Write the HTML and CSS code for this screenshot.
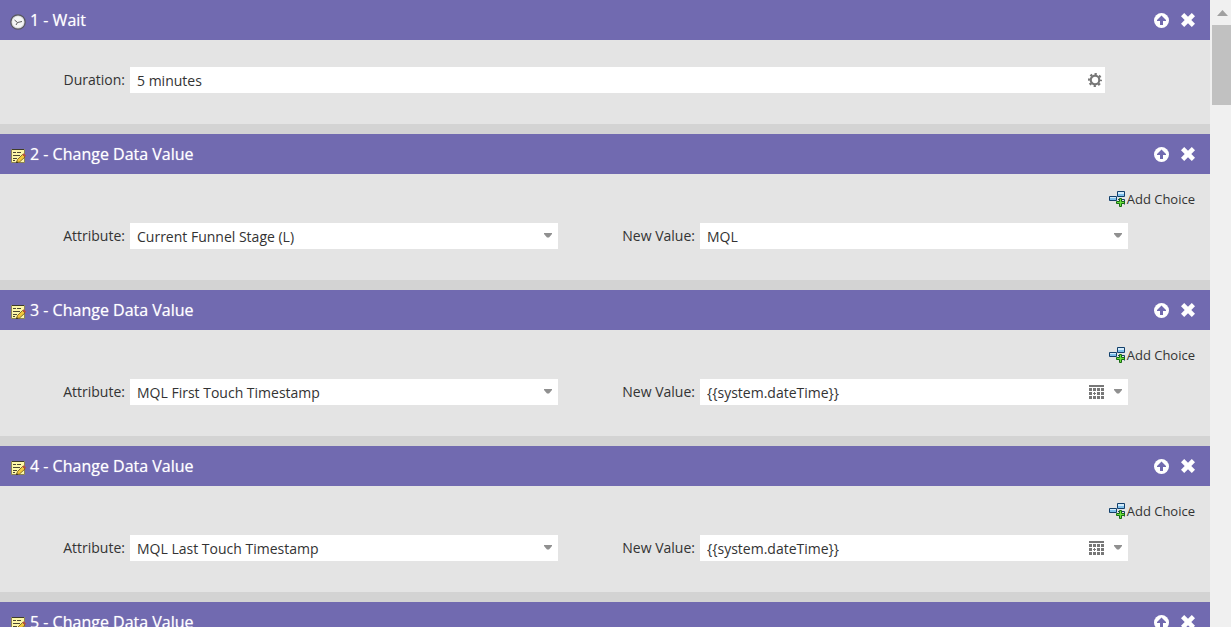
FILE: index.html
```html
<!DOCTYPE html>
<html lang="en">
<head>
  <meta charset="UTF-8">
  <title>Flow</title>
  <link rel="stylesheet" href="styles.css">
</head>
<body>

  <!-- Shared icons -->
  <svg class="icon-defs" aria-hidden="true">
    <symbol id="icon-clock" viewBox="0 0 16 16">
      <circle cx="8" cy="8" r="7.2" fill="#cfd0d2" stroke="#56565c" stroke-width="1.2"/>
      <circle cx="8" cy="8" r="5.8" fill="#f4f6f5"/>
      <path d="M4.500 6L7.500 8.500L12 7.500M7.500 8.500L6 11" fill="none" stroke="#5b5b5b"/>
    </symbol>
    <symbol id="icon-note" viewBox="0 0 16 16">
      <path d="M1.500 1.500h13v13h-13z" fill="#fdf7a8" stroke="#8b8352"/>
      <path d="M2 1.500h12" stroke="#3f3b28"/>
      <path d="M3 4.500h3M7 4.500h4M3 7.500h7M3 10.500h4M3 12.500h2" stroke="#4d4832"/>
      <path d="M6.500 14.500l1-3L12.500 6.500l2.500 2.500-5.500 5z" fill="#f3c83c" stroke="#69511b" stroke-width=".8"/>
      <path d="M12.500 6.500l1.200-1.300 2.300 2.300-1 1.500z" fill="#b94b43"/>
      <path d="M6.200 15l.5-1.700 1.400 1.200z" fill="#222"/>
    </symbol>
    <symbol id="icon-up" viewBox="0 0 15 15">
      <circle cx="7.500" cy="7.500" r="7.500" fill="#fff"/>
      <path d="M7.500 2.500L12 7v1H9v4H6V8H3V7z" fill="#716ab0"/>
    </symbol>
    <symbol id="icon-close" viewBox="0 0 14 14">
      <path d="M3.200 0L7 3.700 10.800 0 14 3.200 10.300 7 14 10.800 10.800 14 7 10.300 3.200 14 0 10.800 3.700 7 0 3.200z" fill="#fff"/>
    </symbol>
    <symbol id="icon-gear" viewBox="0 0 14 14">
      <circle cx="7" cy="7" r="4.300" fill="none" stroke="#777" stroke-width="2.200"/>
      <circle cx="7" cy="7" r="6" fill="none" stroke="#777" stroke-width="2" stroke-dasharray="2.300 2.412" stroke-dashoffset="1.150"/>
    </symbol>
    <symbol id="icon-choice" viewBox="0 0 16 16">
      <path d="M8.500 .5h7v5h-7zM.5 5.500h7v4h-7z" fill="#7fc0ec" stroke="#123f6b"/>
      <path d="M9 1h6v2H9zM1 6h6v1H1z" fill="#d2ebfb"/>
      <path d="M9 8.500h6.500v5" fill="none" stroke="#123f6b"/>
      <path d="M10.500 7.500h2v3h3v2h-3v3h-2v-3h-3v-2h3z" fill="#6be03c" stroke="#176a14"/>
    </symbol>
    <symbol id="icon-calendar" viewBox="0 0 15 14">
      <path d="M0 0h15v2H0zM0 3h3v3H0zM4 3h3v3H4zM8 3h3v3H8zM12 3h3v3h-3zM0 7h3v3H0zM8 7h3v3H8zM12 7h3v3h-3zM0 11h3v3H0zM4 11h3v3H4zM8 11h3v3H8zM12 11h3v3h-3zM5 7h1v1h1v1H6v1H5V9H4V8h1z" fill="#777"/>
    </symbol>
    <symbol id="icon-arrow" viewBox="0 0 8 5">
      <path d="M0 0h8v1L5 4.500H3L0 1z" fill="#909090"/>
    </symbol>
  </svg>

  <main class="flow">

    <section class="step">
      <header class="step-header">
        <svg class="step-icon"><use href="#icon-clock"/></svg>
        <h2 class="step-title">1 - Wait</h2>
        <button class="icon-button" type="button" aria-label="Move up"><svg class="up-icon"><use href="#icon-up"/></svg></button>
        <button class="icon-button" type="button" aria-label="Remove"><svg class="close-icon"><use href="#icon-close"/></svg></button>
      </header>
      <div class="step-body step-body-wait">
        <div class="field">
          <label class="field-label" for="duration">Duration:</label>
          <div class="field-box field-box-gear">
            <input class="field-value" id="duration" type="text" value="5 minutes">
            <button class="icon-button" type="button" aria-label="Settings"><svg class="gear-icon"><use href="#icon-gear"/></svg></button>
          </div>
        </div>
      </div>
    </section>

    <section class="step">
      <header class="step-header">
        <svg class="step-icon"><use href="#icon-note"/></svg>
        <h2 class="step-title">2 - Change Data Value</h2>
        <button class="icon-button" type="button" aria-label="Move up"><svg class="up-icon"><use href="#icon-up"/></svg></button>
        <button class="icon-button" type="button" aria-label="Remove"><svg class="close-icon"><use href="#icon-close"/></svg></button>
      </header>
      <div class="step-body">
        <button class="add-choice" type="button"><svg class="choice-icon"><use href="#icon-choice"/></svg>Add Choice</button>
        <div class="fields">
          <div class="field">
            <label class="field-label" for="attribute2">Attribute:</label>
            <div class="field-box">
              <select class="field-value" id="attribute2"><option>Current Funnel Stage (L)</option></select>
              <svg class="arrow-icon"><use href="#icon-arrow"/></svg>
            </div>
          </div>
          <div class="field">
            <label class="field-label" for="value2">New Value:</label>
            <div class="field-box">
              <select class="field-value" id="value2"><option>MQL</option></select>
              <svg class="arrow-icon"><use href="#icon-arrow"/></svg>
            </div>
          </div>
        </div>
      </div>
    </section>

    <section class="step">
      <header class="step-header">
        <svg class="step-icon"><use href="#icon-note"/></svg>
        <h2 class="step-title">3 - Change Data Value</h2>
        <button class="icon-button" type="button" aria-label="Move up"><svg class="up-icon"><use href="#icon-up"/></svg></button>
        <button class="icon-button" type="button" aria-label="Remove"><svg class="close-icon"><use href="#icon-close"/></svg></button>
      </header>
      <div class="step-body">
        <button class="add-choice" type="button"><svg class="choice-icon"><use href="#icon-choice"/></svg>Add Choice</button>
        <div class="fields">
          <div class="field">
            <label class="field-label" for="attribute3">Attribute:</label>
            <div class="field-box">
              <select class="field-value" id="attribute3"><option>MQL First Touch Timestamp</option></select>
              <svg class="arrow-icon"><use href="#icon-arrow"/></svg>
            </div>
          </div>
          <div class="field">
            <label class="field-label" for="value3">New Value:</label>
            <div class="field-box">
              <select class="field-value" id="value3"><option>{{system.dateTime}}</option></select>
              <button class="icon-button" type="button" aria-label="Pick a date"><svg class="calendar-icon"><use href="#icon-calendar"/></svg></button>
              <svg class="arrow-icon"><use href="#icon-arrow"/></svg>
            </div>
          </div>
        </div>
      </div>
    </section>

    <section class="step">
      <header class="step-header">
        <svg class="step-icon"><use href="#icon-note"/></svg>
        <h2 class="step-title">4 - Change Data Value</h2>
        <button class="icon-button" type="button" aria-label="Move up"><svg class="up-icon"><use href="#icon-up"/></svg></button>
        <button class="icon-button" type="button" aria-label="Remove"><svg class="close-icon"><use href="#icon-close"/></svg></button>
      </header>
      <div class="step-body">
        <button class="add-choice" type="button"><svg class="choice-icon"><use href="#icon-choice"/></svg>Add Choice</button>
        <div class="fields">
          <div class="field">
            <label class="field-label" for="attribute4">Attribute:</label>
            <div class="field-box">
              <select class="field-value" id="attribute4"><option>MQL Last Touch Timestamp</option></select>
              <svg class="arrow-icon"><use href="#icon-arrow"/></svg>
            </div>
          </div>
          <div class="field">
            <label class="field-label" for="value4">New Value:</label>
            <div class="field-box">
              <select class="field-value" id="value4"><option>{{system.dateTime}}</option></select>
              <button class="icon-button" type="button" aria-label="Pick a date"><svg class="calendar-icon"><use href="#icon-calendar"/></svg></button>
              <svg class="arrow-icon"><use href="#icon-arrow"/></svg>
            </div>
          </div>
        </div>
      </div>
    </section>

    <section class="step">
      <header class="step-header">
        <svg class="step-icon"><use href="#icon-note"/></svg>
        <h2 class="step-title">5 - Change Data Value</h2>
        <button class="icon-button" type="button" aria-label="Move up"><svg class="up-icon"><use href="#icon-up"/></svg></button>
        <button class="icon-button" type="button" aria-label="Remove"><svg class="close-icon"><use href="#icon-close"/></svg></button>
      </header>
    </section>

  </main>

  <!-- Scrollbar -->
  <div class="scrollbar" aria-hidden="true">
    <svg class="scroll-up" viewBox="0 0 11 6"><path d="M0 6L5.500 0L11 6z" fill="#a0a0a0"/></svg>
    <div class="scroll-thumb"></div>
  </div>

</body>
</html>
```

FILE: styles.css
```css
* {
  box-sizing: border-box;
}

body {
  margin: 0;
  height: 100vh;
  display: flex;
  overflow: hidden;
  font-family: "Open Sans", "Noto Sans", sans-serif;
  font-size: 14px;
  color: #333;
  background: #d3d3d3;
}

svg {
  display: block;
  flex: none;
}

button,
input,
select {
  margin: 0;
  padding: 0;
  border: 0;
  background: none;
  font: inherit;
  color: inherit;
}

button {
  cursor: pointer;
}

.icon-defs {
  display: none;
}

/* Flow steps */
.flow {
  flex: 1;
  min-width: 0;
  display: flex;
  flex-direction: column;
  gap: 10px;
  overflow: hidden;
}

.step {
  flex: none;
}

.step-header {
  display: flex;
  align-items: center;
  gap: 12px;
  height: 40px;
  padding: 0 15px 0 10px;
  background: #716ab0;
  color: #fff;
}

.step-icon {
  width: 16px;
  height: 16px;
  margin: 4px -8px 0 0;
}

.step-title {
  flex: 1;
  margin: 0;
  font-size: 16px;
  font-weight: 500;
  line-height: 24px;
  text-shadow: 0 0 1px rgba(255, 255, 255, 0.6);
}

.icon-button {
  flex: none;
}

.up-icon {
  width: 15px;
  height: 15px;
}

.close-icon {
  width: 14px;
  height: 14px;
}

.step-body {
  padding: 16px 0 31px;
  background: #e4e4e4;
}

.step-body-wait {
  padding: 27px 105px 31px 0;
}

.add-choice {
  display: flex;
  align-items: center;
  margin: 0 15px 15px auto;
  font-size: 13px;
  line-height: 18px;
}

.choice-icon {
  width: 16px;
  height: 16px;
  margin-right: 2px;
}

/* Fields */
.fields {
  display: flex;
  gap: 12px;
  padding-right: 82px;
}

.field {
  flex: 1;
  min-width: 0;
  display: flex;
  align-items: center;
  gap: 5px;
}

.field-label {
  width: 125px;
  text-align: right;
  line-height: 20px;
}

.field-box {
  flex: 1;
  min-width: 0;
  display: flex;
  align-items: center;
  gap: 10px;
  height: 26px;
  padding-right: 6px;
  background: #fff;
}

.field-box-gear {
  padding-right: 3px;
}

.field-value {
  flex: 1;
  min-width: 0;
  height: 26px;
  padding: 0 0 0 7px;
  appearance: none;
  outline: none;
}

.gear-icon {
  width: 14px;
  height: 14px;
}

.calendar-icon {
  width: 15px;
  height: 14px;
}

.arrow-icon {
  width: 8px;
  height: 5px;
  margin-bottom: 1px;
}

/* Scrollbar */
.scrollbar {
  width: 21px;
  padding: 10px 0 0 2px;
  background: #f0f0f0;
}

.scroll-up {
  width: 11px;
  height: 6px;
  margin-left: 5px;
}

.scroll-thumb {
  height: 80px;
  margin-top: 9px;
  background: #c1c1c1;
}
```
